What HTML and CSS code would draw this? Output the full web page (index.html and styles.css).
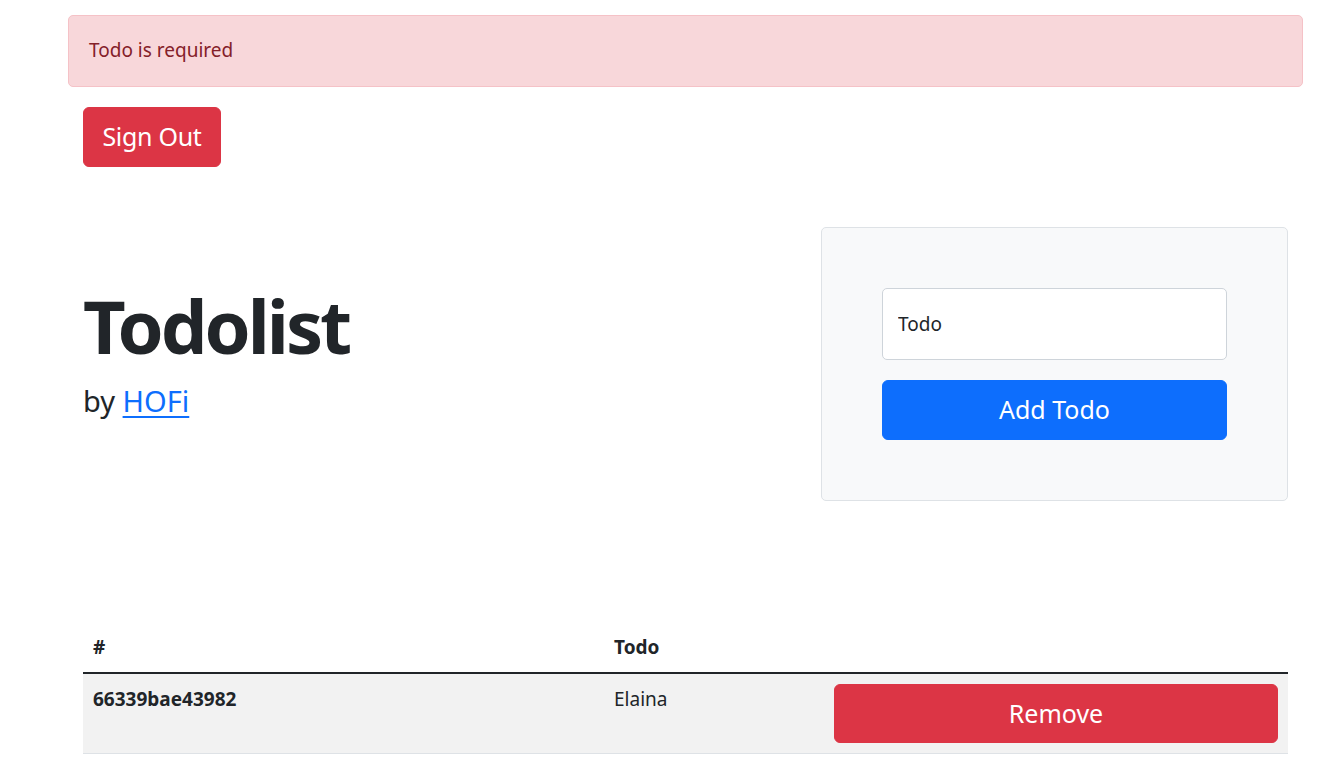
FILE: index.html
```html
<!DOCTYPE html>
<html lang="en">
<head>
<meta charset="utf-8">
<title>Todolist</title>
<link rel="stylesheet" href="styles.css">
</head>
<body>
<div class="page">
  <div class="alert">Todo is required</div>
  <div class="content">
    <button class="btn btn-danger btn-lg signout">Sign Out</button>
    <div class="hero">
      <div class="title-col">
        <h1 class="title">Todolist</h1>
        <p class="by">by <a href="#">HOFi</a></p>
      </div>
      <div class="card">
        <input class="field" type="text" placeholder="Todo">
        <button class="btn btn-primary btn-lg add">Add Todo</button>
      </div>
    </div>
    <table class="table">
      <thead>
        <tr><th class="c1">#</th><th class="c2">Todo</th><th class="c3"></th></tr>
      </thead>
      <tbody>
        <tr>
          <td class="c1 id">66339bae43982</td>
          <td class="c2">Elaina</td>
          <td class="c3"><button class="btn btn-danger btn-lg remove">Remove</button></td>
        </tr>
      </tbody>
    </table>
  </div>
</div>
</body>
</html>
```

FILE: styles.css
```css
* { box-sizing: border-box; }
html, body { margin: 0; padding: 0; background: #fff; }
body {
  font-family: "Noto Sans", "Open Sans", sans-serif;
  font-size: 20px;
  line-height: 1.5;
  color: #212529;
}
.page {
  width: 1235px;
  margin-left: 68px;
  padding-top: 15px;
}
.alert {
  height: 72px;
  padding: 0 20px;
  display: flex;
  align-items: center;
  background: #f8d7da;
  border: 1px solid #f5c2c7;
  border-radius: 5px;
  color: #842029;
  font-size: 19px;
  padding-bottom: 1px;
}
.content {
  padding: 20px 15px 0;
}
.btn {
  font-family: inherit;
  border: 1px solid transparent;
  color: #fff;
  cursor: pointer;
  line-height: 1.5;
  border-radius: 6px;
  white-space: nowrap;
}
.btn-lg {
  font-size: 25px;
  height: 60px;
  padding: 0 20px;
}
.btn-danger { background: #dc3545; border-color: #dc3545; }
.btn-primary { background: #0d6efd; border-color: #0d6efd; }
.signout { display: block; width: 138px; padding: 0; letter-spacing: -0.3px; }
.hero {
  margin-top: 60px;
  display: grid;
  grid-template-columns: 1fr 467px;
  column-gap: 60px;
  align-items: start;
}
.title-col { padding-top: 55px; }
.title {
  margin: 0 0 8px;
  font-size: 74px;
  font-weight: 700;
  line-height: 1.2;
  letter-spacing: -3px;
}
.by {
  margin: 0;
  font-size: 29px;
  line-height: 1.5;
}
.by a { color: #0d6efd; text-decoration: underline; text-underline-offset: 4px; }
.card {
  background: #f8f9fa;
  border: 1px solid #dee2e6;
  border-radius: 5px;
  padding: 60px;
  display: flex;
  flex-direction: column;
}
.field {
  display: block;
  width: 100%;
  height: 72px;
  padding: 0 15px;
  border: 1px solid #ced4da;
  border-radius: 5px;
  background: #fff;
  font-family: inherit;
  font-size: 19px;
  color: #212529;
  outline: none;
}
.field::placeholder { color: #212529; opacity: 1; }
.add { margin-top: 20px; width: 100%; }
.table {
  margin-top: 121px;
  width: 100%;
  border-collapse: collapse;
  font-size: 19px;
}
.table th, .table td {
  padding: 10px;
  text-align: left;
  vertical-align: top;
  line-height: 30px;
}
.table th { font-weight: 700; border-bottom: 2px solid #212529; }
.table tbody tr { background: #f2f2f2; }
.table tbody td { border-bottom: 1px solid #dee2e6; }
.c1 { width: 521px; }
.c2 { width: 220px; }
.id { font-weight: 700; }
.remove { display: block; width: 100%; height: 59px; font-size: 25px; }
```
